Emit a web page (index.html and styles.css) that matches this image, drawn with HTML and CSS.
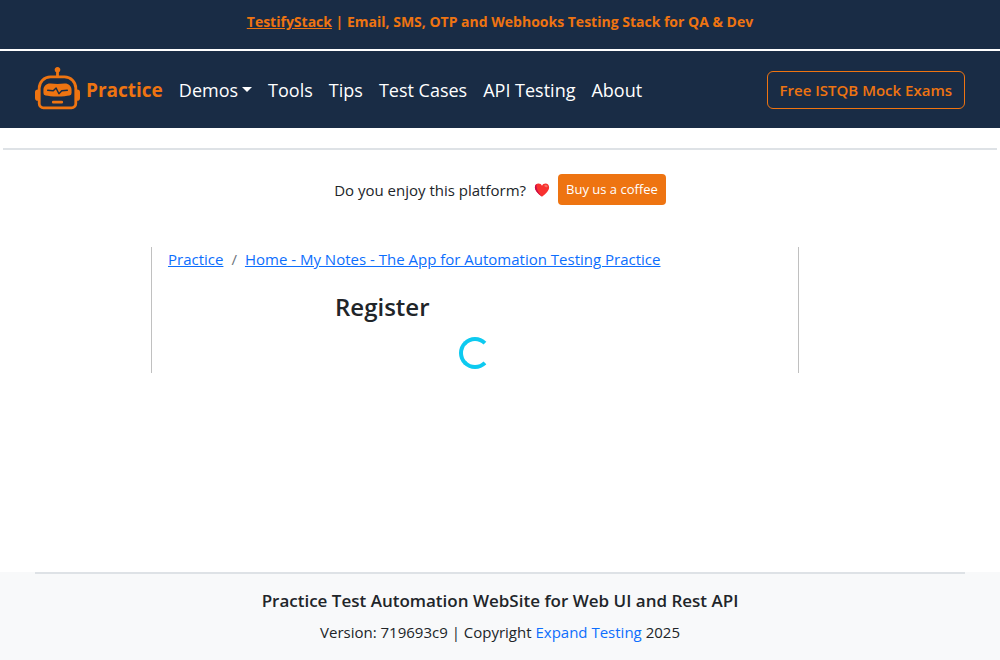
FILE: index.html
```html
<!DOCTYPE html>
<html lang="en">
<head>
<meta charset="utf-8">
<meta name="viewport" content="width=device-width, initial-scale=1">
<title>Register - Practice Test Automation</title>
<link rel="stylesheet" href="styles.css">
</head>
<body>
<div class="promo"><a href="#">TestifyStack</a> | Email, SMS, OTP and Webhooks Testing Stack for QA &amp; Dev</div>
<nav class="navbar">
  <a class="brand" href="#">
    <svg class="brand-icon" viewBox="0 0 16 16" fill="currentColor" aria-hidden="true">
      <path d="M6 12.5a.5.5 0 0 1 .5-.5h3a.5.5 0 0 1 0 1h-3a.5.5 0 0 1-.5-.5M3 8.062C3 6.76 4.235 5.765 5.53 5.886a26.6 26.6 0 0 0 4.94 0C11.765 5.765 13 6.76 13 8.062v1.157a.93.93 0 0 1-.765.935c-.845.147-2.34.346-4.235.346s-3.39-.2-4.235-.346A.93.93 0 0 1 3 9.219zm4.542-.827a.25.25 0 0 0-.217.068l-.92.9a25 25 0 0 1-1.871-.183.25.25 0 0 0-.068.495c.55.076 1.232.149 2.02.193a.25.25 0 0 0 .189-.071l.754-.736.847 1.71a.25.25 0 0 0 .404.062l.932-.97a25 25 0 0 0 1.922-.188.25.25 0 0 0-.068-.495c-.538.074-1.207.145-1.98.189a.25.25 0 0 0-.166.076l-.754.785-.842-1.7a.25.25 0 0 0-.182-.135"/>
      <path d="M8.5 1.866a1 1 0 1 0-1 0V3h-2A4.5 4.5 0 0 0 1 7.5V8a1 1 0 0 0-1 1v2a1 1 0 0 0 1 1v1a2 2 0 0 0 2 2h10a2 2 0 0 0 2-2v-1a1 1 0 0 0 1-1V9a1 1 0 0 0-1-1v-.5A4.5 4.5 0 0 0 10.5 3h-2zM14 7.5V13a1 1 0 0 1-1 1H3a1 1 0 0 1-1-1V7.5A3.5 3.5 0 0 1 5.5 4h5A3.5 3.5 0 0 1 14 7.5"/>
    </svg>
    <span>Practice</span>
  </a>
  <div class="nav-links">
    <a class="dropdown" href="#">Demos</a>
    <a href="#">Tools</a>
    <a href="#">Tips</a>
    <a href="#">Test Cases</a>
    <a href="#">API Testing</a>
    <a href="#">About</a>
  </div>
  <a class="exam-link" href="#">Free ISTQB Mock Exams</a>
</nav>
<hr class="rule">
<div class="support">
  <span>Do you enjoy this platform?</span>
  <svg class="heart" viewBox="0 0 18 16" aria-hidden="true">
    <path fill="#f8312f" d="M9 15.500C7 14 1 9.500 1 5.200 1 2.500 2.800.8 5 .8c1.800 0 3.200 1 4 2.500C9.800 1.800 11.200.8 13 .8c2.200 0 4 1.700 4 4.400 0 4.300-6 8.800-8 10.300z"/>
    <path fill="#ca0b4a" d="M9 15.500C7 14 1 9.500 1 5.200 1 3.400 1.800 2 3 1.300 2 5.500 4.500 10.800 9 15.500z"/>
    <ellipse cx="13.500" cy="3.500" rx="2" ry="1.200" fill="#f37366" transform="rotate(25 13.500 3.500)"/>
  </svg>
  <a class="coffee" href="#">Buy us a coffee</a>
</div>
<div class="layout">
  <main class="content">
    <nav class="breadcrumb" aria-label="breadcrumb">
      <a href="#">Practice</a><span class="separator">/</span><a href="#">Home - My Notes - The App for Automation Testing Practice</a>
    </nav>
    <section class="register">
      <h1>Register</h1>
      <div class="spinner" role="status" aria-label="Loading"></div>
    </section>
  </main>
</div>
<footer class="footer">
  <hr class="footer-rule">
  <h2>Practice Test Automation WebSite for Web UI and Rest API</h2>
  <p>Version: 719693c9 | Copyright <a href="#">Expand Testing</a> 2025</p>
</footer>
</body>
</html>
```
FILE: styles.css
```css
* { box-sizing: border-box; }

body {
  margin: 0;
  min-height: 100vh;
  display: flex;
  flex-direction: column;
  background: #fff;
  color: #212529;
  font: 15px/24px "Open Sans", "Noto Sans", sans-serif;
}

h1, h2, p, hr { margin: 0; }
hr { border: 0; border-top: 2px solid #dee2e6; }

.promo {
  padding: 10px 16px 15px;
  border-bottom: 2px solid #fff;
  background: #192c45;
  color: #ee7411;
  font-size: 14px;
  font-weight: 700;
  text-align: center;
}
.promo a { color: inherit; }

.navbar {
  display: flex;
  align-items: center;
  padding: 16px 35px;
  background: #192c45;
}
.navbar a { text-decoration: none; }

.brand {
  display: flex;
  align-items: center;
  gap: 6px;
  margin-right: 16px;
  color: #ee7411;
  font-size: 19px;
  font-weight: 700;
}
.brand-icon { width: 45px; height: 45px; }

.nav-links {
  display: flex;
  gap: 16px;
  flex: 1;
  font-size: 18px;
}
.nav-links a { color: #fff; white-space: nowrap; }
.dropdown { display: flex; align-items: center; gap: 4px; }
.dropdown::after {
  content: "";
  border: 5px solid transparent;
  border-top-color: #fff;
  border-bottom: 0;
}

.exam-link {
  padding: 6px 12px;
  border: 1px solid #ee7411;
  border-radius: 6px;
  color: #ee7411;
  font-weight: 600;
  white-space: nowrap;
}

.rule { margin: 20px 3px 24px; }

.support {
  display: flex;
  justify-content: center;
  align-items: center;
  gap: 8px;
}
.heart { width: 16px; height: 16px; }
.coffee {
  padding: 4px 8px;
  border-radius: 4px;
  background: #ee7411;
  color: #fff;
  font-size: 13px;
  line-height: 23px;
  text-decoration: none;
}

.layout {
  display: grid;
  grid-template-columns: 151fr 648fr 201fr;
  margin-top: 42px;
  margin-bottom: 24px;
}
.content {
  grid-column: 2;
  padding: 0 16px 4px;
  border-left: 1px solid #c0c0c0;
  border-right: 1px solid #c0c0c0;
}
.breadcrumb { margin-bottom: 20px; }
.breadcrumb a { color: #0d6efd; }
.separator { padding: 0 8px; color: #6c757d; }

.register { max-width: 280px; margin: 0 auto; }
.register h1 {
  margin-bottom: 14px;
  font-size: 24px;
  font-weight: 600;
  line-height: 32px;
}
.spinner {
  width: 32px;
  height: 32px;
  margin: 0 auto;
  border: 4px solid #0dcaf0;
  border-right-color: transparent;
  border-radius: 50%;
}

.footer {
  margin-top: auto;
  padding: 0 35px 16px;
  background: #f8f9fa;
  text-align: center;
}
.footer-rule { margin-bottom: 15px; }
.footer h2 {
  margin-bottom: 8px;
  font-size: 17px;
  font-weight: 600;
  line-height: 24px;
}
.footer p { line-height: 23px; }
.footer a { color: #0d6efd; text-decoration: none; }
```
